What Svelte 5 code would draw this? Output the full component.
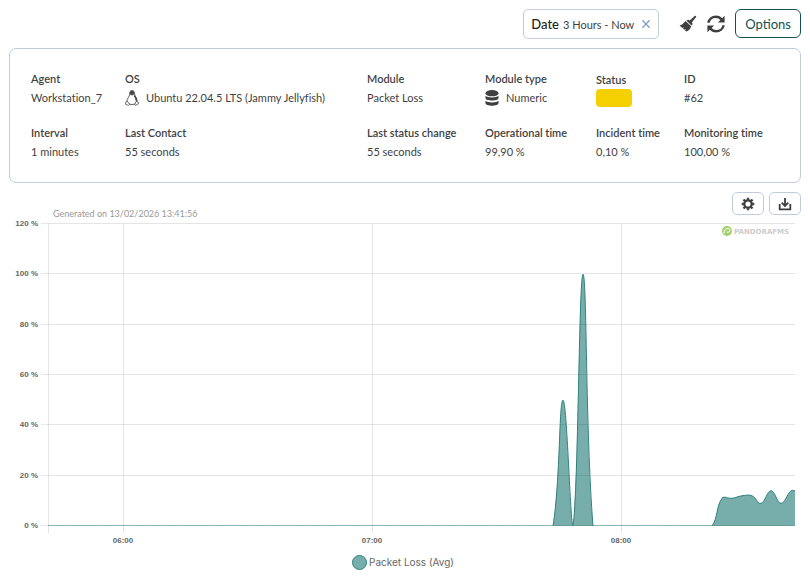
<script>
  const fields = [
    { label: 'Agent', value: 'Workstation_7' },
    { label: 'OS', value: 'Ubuntu 22.04.5 LTS (Jammy Jellyfish)', icon: 'linux' },
    { label: 'Module', value: 'Packet Loss' },
    { label: 'Module type', value: 'Numeric', icon: 'db' },
    { label: 'Status', status: true },
    { label: 'ID', value: '#62' },
    { label: 'Interval', value: '1 minutes' },
    { label: 'Last Contact', value: '55 seconds' },
    { label: 'Last status change', value: '55 seconds' },
    { label: 'Operational time', value: '99,90 %' },
    { label: 'Incident time', value: '0,10 %' },
    { label: 'Monitoring time', value: '100,00 %' },
  ];

  // plot area, in svg units
  const area = { left: 48, right: 795, top: 8, bottom: 310 };
  const yTicks = [0, 20, 40, 60, 80, 100, 120];
  const xTicks = [
    { x: 123, label: '06:00' },
    { x: 372, label: '07:00' },
    { x: 621, label: '08:00' },
  ];

  // x position, packet loss %
  const series = [
    [48, 0], [543, 0], [553, 0], [563, 50], [573, 0], [583, 100], [593, 0], [603, 0],
    [702, 0], [712, 0], [722, 11], [732, 11], [742, 12], [752, 12],
    [761, 9], [771, 14], [781, 9], [791, 14], [795, 14],
  ];

  const tension = 0.4;
  const y = (v) => area.bottom - (v / 120) * (area.bottom - area.top);
  const cap = (v) => Math.min(area.bottom, Math.max(area.top, v));
  const dist = (a, b) => Math.hypot(b[0] - a[0], b[1] - a[1]);

  function spline(points) {
    const ctrl = points.map((p, i) => {
      const prev = points[i - 1] ?? p;
      const next = points[i + 1] ?? p;
      const total = dist(prev, p) + dist(p, next);
      const a = (tension * dist(prev, p)) / total;
      const b = (tension * dist(p, next)) / total;
      const dx = next[0] - prev[0];
      const dy = next[1] - prev[1];
      return {
        in: [p[0] - a * dx, cap(p[1] - a * dy)],
        out: [p[0] + b * dx, cap(p[1] + b * dy)],
      };
    });
    let d = `M${points[0]}`;
    for (let i = 1; i < points.length; i++) {
      d += `C${ctrl[i - 1].out} ${ctrl[i].in} ${points[i]}`;
    }
    return d;
  }

  const line = spline(series.map(([x, v]) => [x, y(v)]));
  const fill = `${line}L${area.right},${area.bottom}L${area.left},${area.bottom}Z`;

  let showDate = $state(true);
</script>

<main>
  <header class="toolbar">
    {#if showDate}
      <div class="date">
        <span class="date-label">Date</span>
        <span class="date-value">3 Hours - Now</span>
        <button class="clear" aria-label="Clear date" onclick={() => (showDate = false)}>
          <svg viewBox="0 0 10 10" width="10" height="10" aria-hidden="true"><path d="M1.3 1.3l7.4 7.4M8.7 1.3L1.3 8.7" fill="none" stroke="#8ba3c7" stroke-width="1.5" /></svg>
        </button>
      </div>
    {/if}
    <div class="tools">
      <button class="plain" aria-label="Clean">
        <svg viewBox="0 0 18 18" width="18" height="18" aria-hidden="true">
          <path d="M15.900.8c.6-.5 1.800.5 1.200 1.300L12.800 7.500l.6.8c.3.6.2 1-.2 1.500l-.7.8-5-4.900.9-.7c.5-.4 1-.5 1.500-.1l.8.5z" fill="#3f3f3f" />
          <path d="M6.500 5.900l5.600 5.400c-.4 2.600-2.200 4.300-4.800 5.200l-1.200-1 .8-1.500-1.800.8-1.100-1 1.100-1.500-1.900.7L.5 10.200C2.700 10.200 4.700 8 6.500 5.900z" fill="#3f3f3f" />
        </svg>
      </button>
      <button class="plain" aria-label="Refresh">
        <svg viewBox="0 0 18 18" width="18" height="18" aria-hidden="true">
          <path d="M1.300 7.800C2.100 4.300 5.200 1.700 8.800 1.700c2.500 0 4.400 1 5.700 2.700M16.700 10.200c-.8 3.500-3.900 6.100-7.500 6.100-2.500 0-4.400-1-5.700-2.700" fill="none" stroke="#3f3f3f" stroke-width="2.400" />
          <path d="M17.600.8v6.700h-6.700zM.4 17.200v-6.700h6.700z" fill="#3f3f3f" />
        </svg>
      </button>
      <button class="options">Options</button>
    </div>
  </header>

  <section class="card">
    {#each fields as f}
      <div class="field">
        {#if f.status}
          <span class="label tight">{f.label}</span>
          <span class="pill" role="img" aria-label="Warning"></span>
        {:else}
          <span class="label">{f.label}</span>
          <span class="value">
            {#if f.icon === 'linux'}
              <svg viewBox="0 0 14 16" width="14" height="16" aria-hidden="true">
                <path d="M4.700 4.200C4.500 1.900 5.100.6 7 .6s2.600 1.300 2.500 3.300c0 1.900 2.600 3.800 2.600 7.100 0 2.300-2.200 3.500-5 3.500s-5.200-1-5.200-3.300c0-2.700 2.900-4.500 2.800-7z" fill="#fff" stroke="#4a4a4a" stroke-width=".9" />
                <path d="M4.900 4C4.700 1.800 5.300.7 7 .7s2.500 1.100 2.400 3.100L8 5.200H6z" fill="#4a4a4a" />
                <path d="M9.300 5.500c1.200 1.500 2.100 3 2.200 5.400" fill="none" stroke="#4a4a4a" stroke-width="1.500" />
                <path d="M.7 12.200l1.900-.7 2.100 3-1 .9-3.100-1zM13.300 12.200l-2.100-.8-1.500 2.800.7 1.200 3-1.500z" fill="#fff" stroke="#4a4a4a" stroke-width=".8" />
              </svg>
            {:else if f.icon === 'db'}
              <svg viewBox="0 0 14 16" width="14" height="16" aria-hidden="true">
                <ellipse cx="7" cy="3.200" rx="6.500" ry="3.100" fill="#3f3f3f" />
                <path d="M.5 5.700c2 2.300 11 2.300 13 0v2.500c0 3-13 3-13 0z" fill="#3f3f3f" />
                <path d="M.5 10.700c2 2.300 11 2.300 13 0v2.300c0 3.600-13 3.600-13 0z" fill="#3f3f3f" />
              </svg>
            {/if}
            {f.value}
          </span>
        {/if}
      </div>
    {/each}
  </section>

  <section class="graph">
    <div class="graph-head">
      <span class="generated">Generated on 13/02/2026 13:41:56</span>
      <button class="small" aria-label="Settings">
        <svg viewBox="0 0 14 14" width="14" height="14" aria-hidden="true">
          <circle cx="7" cy="7" r="3.700" fill="none" stroke="#3f3f3f" stroke-width="2.300" />
          <path d="M7 .7v2M7 11.300v2M.7 7h2M11.300 7h2M2.500 2.500l1.500 1.500M10 10l1.500 1.500M2.500 11.500l1.500-1.500M10 4l1.500-1.500" stroke="#3f3f3f" stroke-width="2.400" />
        </svg>
      </button>
      <button class="small" aria-label="Download">
        <svg viewBox="0 0 14 14" width="14" height="14" aria-hidden="true">
          <path d="M1.700 7v5.300h10.600V7" fill="none" stroke="#3f3f3f" stroke-width="1.800" />
          <path d="M7 1v7M3.700 5.600L7 8.900l3.300-3.300" fill="none" stroke="#3f3f3f" stroke-width="1.800" />
        </svg>
      </button>
    </div>

    <svg class="chart" viewBox="0 4 810 326" role="img" aria-label="Packet Loss (Avg)">
      <clipPath id="plot">
        <rect x={area.left} y={area.top} width={area.right - area.left} height={area.bottom - area.top} />
      </clipPath>
      <path d={fill} class="fill" />
      <g class="gridlines">
        {#each yTicks as t}
          <line x1={area.left - 7} x2={area.right} y1={Math.round(y(t)) - 0.5} y2={Math.round(y(t)) - 0.5} />
        {/each}
        <line x1="48.5" x2="48.5" y1={area.top} y2={area.bottom + 7} />
        {#each xTicks as t}
          <line x1={t.x + 0.5} x2={t.x + 0.5} y1={area.top} y2={area.bottom + 7} />
        {/each}
      </g>
      <path d={line} class="line" clip-path="url(#plot)" />
      <g class="ticks">
        {#each yTicks as t}
          <text x="38" y={Math.round(y(t)) + 2} text-anchor="end">{t} %</text>
        {/each}
        {#each xTicks as t}
          <text x={t.x} y="327" text-anchor="middle">{t.label}</text>
        {/each}
      </g>
      <g class="brand">
        <circle cx="727" cy="15" r="5" fill="#a5cf6b" />
        <path d="M724 17.500c0-3.500 1.500-5 4-5 1.500 0 2.300 1 2 2.300-.4 1.700-2.500 1.500-3.500 1.200" fill="none" stroke="#fff" stroke-width="1" />
        <text x="734" y="18">PANDORAFMS</text>
      </g>
    </svg>

    <div class="legend"><span class="dot"></span>Packet Loss (Avg)</div>
  </section>
</main>

<style>
  :global(body) {
    background: #fff;
  }

  main {
    padding-top: 9px;
    font-family: Lato, sans-serif;
    font-size: 11px;
    font-variant-ligatures: none;
    color: #3f3f3f;
  }

  button {
    padding: 0;
    border: 0;
    background: none;
    font-family: inherit;
    cursor: pointer;
  }
  svg {
    display: block;
  }

  /* Toolbar */
  .toolbar {
    display: flex;
    justify-content: flex-end;
    align-items: flex-start;
    gap: 20px;
    height: 39px;
    padding: 0 9px;
  }
  .date {
    display: flex;
    align-items: center;
    box-sizing: border-box;
    height: 30px;
    padding: 0 7px;
    border: 1px solid #c0ccdc;
    border-radius: 5px;
  }
  .date-label {
    margin-right: 4px;
    font-size: 13px;
    font-weight: 500;
    color: #222;
  }
  .clear {
    margin-left: 7px;
  }
  .tools {
    display: flex;
    align-items: center;
    gap: 10px;
  }
  .options {
    box-sizing: border-box;
    height: 29px;
    padding: 0 9px;
    border: 1px solid #14524f;
    border-radius: 6px;
    font-size: 13px;
    color: #14524f;
  }

  /* Agent and module details */
  .card {
    display: grid;
    grid-template-columns: 94fr 242fr 118fr 111fr 88fr 96fr;
    row-gap: 16px;
    margin: 0 9px;
    padding: 20px 20px 21px 21px;
    border: 1px solid #c0ccdc;
    border-radius: 7px;
    line-height: 19px;
    white-space: nowrap;
  }
  .label {
    display: block;
    font-weight: 600;
  }
  .tight {
    padding-top: 1px;
  }
  .value {
    display: flex;
    align-items: center;
    gap: 7px;
  }
  .pill {
    display: block;
    width: 36px;
    height: 18px;
    border-radius: 4px;
    background: #f5d000;
  }

  /* Graph */
  .graph-head {
    display: flex;
    align-items: flex-start;
    gap: 5px;
    height: 28px;
    padding: 9px 9px 0 53px;
  }
  .generated {
    align-self: flex-end;
    margin-right: auto;
    font-size: 9px;
    line-height: 12px;
    color: #999;
  }
  .small {
    display: flex;
    align-items: center;
    justify-content: center;
    box-sizing: border-box;
    width: 32px;
    height: 23px;
    border: 1px solid #c0ccdc;
    border-radius: 5px;
  }
  .chart {
    width: 100%;
    height: auto;
  }
  .gridlines line {
    stroke: #000;
    stroke-opacity: 0.1;
  }
  .fill {
    fill: rgb(46, 130, 126);
    fill-opacity: 0.65;
  }
  .line {
    fill: none;
    stroke: #2f827e;
  }
  .ticks text {
    font-family: "Liberation Sans", sans-serif;
    font-size: 8px;
    font-weight: 700;
    fill: #666;
  }
  .brand text {
    font-family: "DejaVu Sans", sans-serif;
    font-size: 7px;
    font-weight: 700;
    fill: #ccc;
  }
  .legend {
    display: flex;
    align-items: center;
    justify-content: center;
    gap: 2px;
    padding: 8px 4px 0 0;
    font-family: Inter, sans-serif;
    font-size: 10px;
    line-height: 16px;
    color: #666;
  }
  .dot {
    box-sizing: border-box;
    width: 15px;
    height: 15px;
    border: 1px solid #2f827e;
    border-radius: 50%;
    background: #77adaa;
  }
</style>
